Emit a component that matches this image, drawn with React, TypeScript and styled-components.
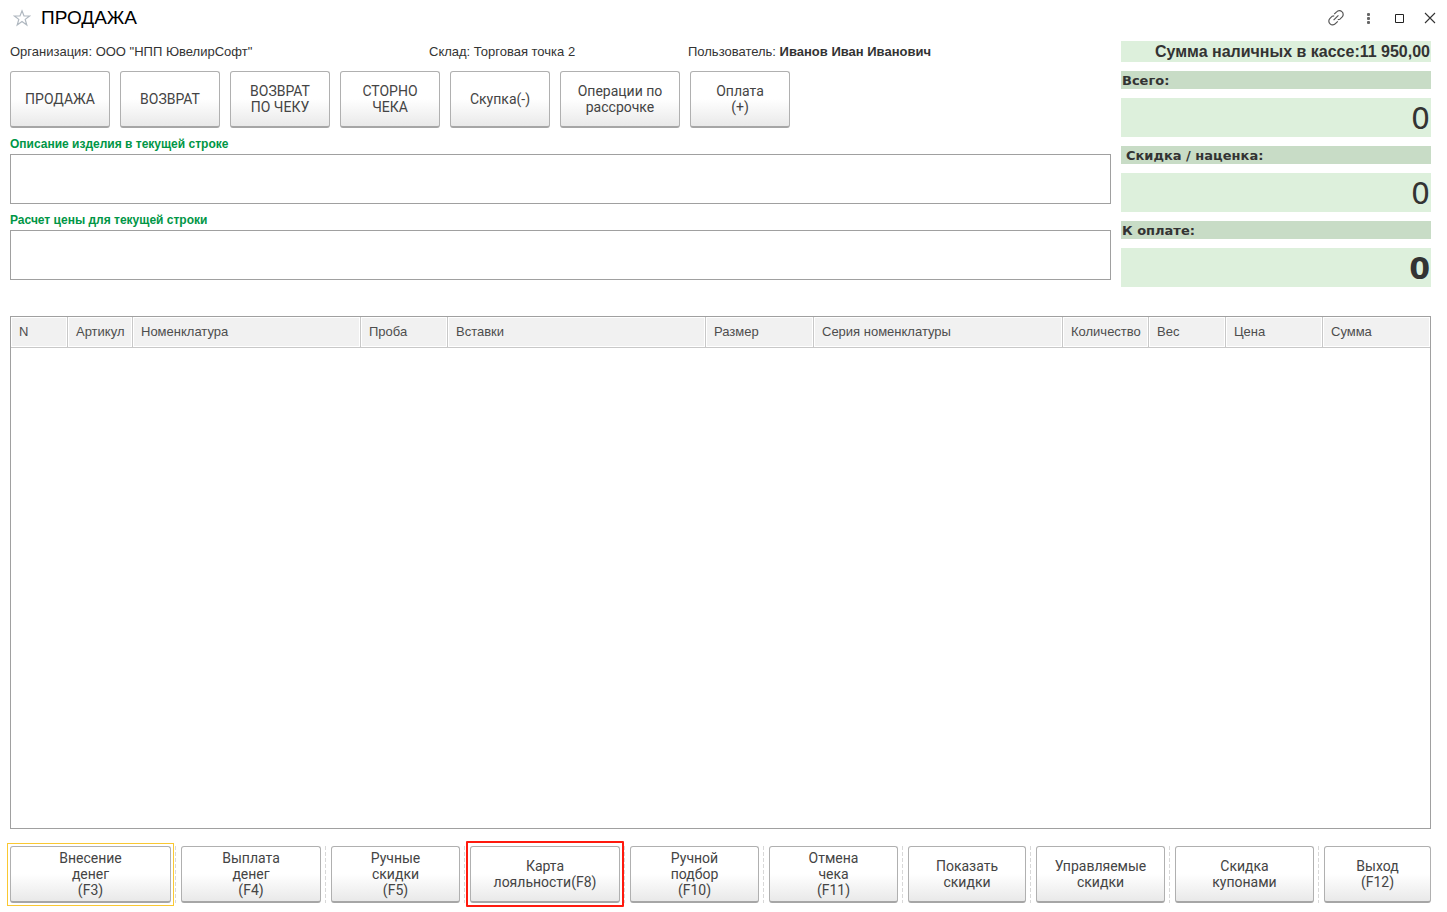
import React from "react";
import styled, { createGlobalStyle, css } from "styled-components";

const sans = `"Liberation Sans", Arial, sans-serif`;

const GlobalStyle = createGlobalStyle`
  *, *::before, *::after { box-sizing: border-box; }
  body { margin: 0; background: #fff; color: #333; font: 13px/16px ${sans}; }
`;

const Window = styled.main`
  display: flex;
  flex-direction: column;
  min-height: 100vh;
  padding: 0 16px 9px 10px;
`;

const TitleBar = styled.header`
  display: flex;
  align-items: center;
  gap: 10px;
  height: 36px;
  padding-left: 3px;
  margin-right: -5px;
`;

const Title = styled.h1`
  flex: 1;
  margin: 0;
  font-size: 19px;
  line-height: 24px;
  font-weight: 400;
  color: #000;
`;

const IconButton = styled.button`
  display: flex;
  align-items: center;
  justify-content: center;
  padding: 0;
  border: 0;
  background: none;
  color: #333;
`;

const WindowControls = styled.div`
  display: flex;
  gap: 16px;
`;

const Top = styled.div`
  display: flex;
  gap: 10px;
  margin-top: 5px;
`;

const Work = styled.section`
  flex: 1;
  min-width: 0;
`;

const Info = styled.div`
  display: flex;
  height: 21px;
  line-height: 21px;
  white-space: nowrap;
`;

const InfoItem = styled.div<{ $width?: number }>`
  width: ${(p) => (p.$width ? `${p.$width}px` : "auto")};
`;

const Actions = styled.div`
  display: flex;
  gap: 10px;
  margin: 9px 0;
`;

const PushButton = styled.button<{ $width?: number; $grow?: number; $mark?: "focus" | "alert" }>`
  position: relative;
  height: 57px;
  padding: 0 4px;
  border: 1px solid #b0b0b0;
  border-bottom: 2px solid #a6a6a6;
  border-radius: 3px;
  background: linear-gradient(#fff 50%, #e9e9e9);
  color: #444;
  font: 14px/16px Roboto, ${sans};
  white-space: pre-line;
  ${(p) => p.$width && css`width: ${p.$width}px;`}
  ${(p) => p.$grow && css`flex: ${p.$grow} 1 ${p.$grow}px; min-width: 0;`}
  ${(p) => p.$mark && css`
    &::after {
      content: "";
      position: absolute;
      z-index: 1;
      pointer-events: none;
    }
  `}
  ${(p) => p.$mark === "focus" && css`&::after { inset: -4px -4px -5px; border: 1px solid #fac832; }`}
  ${(p) => p.$mark === "alert" && css`&::after { inset: -6px -5px; border: 2px solid #ff1a0e; border-radius: 1px; }`}
`;

const FieldLabel = styled.label`
  display: block;
  height: 17px;
  line-height: 14px;
  font-size: 12px;
  font-weight: 700;
  color: #009646;
`;

const Field = styled.textarea`
  display: block;
  width: 100%;
  height: 50px;
  margin-bottom: 9px;
  border: 1px solid #a0a0a0;
  border-radius: 0;
  resize: none;
`;

const Totals = styled.aside`
  display: flex;
  flex-direction: column;
  gap: 9px;
  width: 310px;
`;

const Cash = styled.div`
  height: 21px;
  background: #ddf0dc;
  font-size: 16px;
  line-height: 21px;
  font-weight: 700;
  text-align: right;
  padding-right: 1px;
`;

const TotalName = styled.div<{ $indent?: boolean }>`
  height: 18px;
  padding-left: ${(p) => (p.$indent ? 5 : 1)}px;
  background: #c8dcc6;
  font: 700 13px/20px "DejaVu Sans", Verdana, sans-serif;
`;

const TotalValue = styled.div<{ $strong?: boolean }>`
  height: 39px;
  padding-right: 1px;
  background: #ddf0dc;
  font: ${(p) => (p.$strong ? 700 : 400)} 30px/42px "DejaVu Sans", Tahoma, sans-serif;
  text-align: right;
`;

const Grid = styled.div`
  flex: 1;
  margin-top: 27px;
  border: 1px solid #a0a0a0;
`;

const Table = styled.table`
  width: 100%;
  table-layout: fixed;
  border-collapse: separate;
  border-spacing: 0;
`;

const HeadCell = styled.th<{ $width: number }>`
  width: ${(p) => p.$width}px;
  height: 31px;
  padding: 0 0 1px 8px;
  border: solid #c8c8c8;
  border-width: 0 1px 1px 0;
  background: #f1f1f1;
  box-shadow: inset 0 0 0 1px #fff;
  color: #4d4d4d;
  font-weight: 400;
  text-align: left;
  white-space: nowrap;
  &:last-child { border-right: 0; }
`;

const Commands = styled.footer`
  display: flex;
  margin-top: 17px;
`;

const Divider = styled.span`
  flex: none;
  width: 1px;
  margin: 0 5px 0 4px;
  background: repeating-linear-gradient(#d8d8d8 0 4px, transparent 4px 6px);
`;

const columns: [string, number][] = [
  ["N", 57], ["Артикул", 65], ["Номенклатура", 228], ["Проба", 87], ["Вставки", 258],
  ["Размер", 108], ["Серия номенклатуры", 249], ["Количество", 86], ["Вес", 77], ["Цена", 97], ["Сумма", 107],
];

const actions: [string, number][] = [
  ["ПРОДАЖА", 100], ["ВОЗВРАТ", 100], ["ВОЗВРАТ\nПО ЧЕКУ", 100], ["СТОРНО\nЧЕКА", 100],
  ["Скупка(-)", 100], ["Операции по\nрассрочке", 120], ["Оплата\n(+)", 100],
];

const commands: { text: string; grow: number; mark?: "focus" | "alert" }[] = [
  { text: "Внесение\nденег\n(F3)", grow: 161, mark: "focus" },
  { text: "Выплата\nденег\n(F4)", grow: 140 },
  { text: "Ручные\nскидки\n(F5)", grow: 129 },
  { text: "Карта\nлояльности(F8)", grow: 150, mark: "alert" },
  { text: "Ручной\nподбор\n(F10)", grow: 129 },
  { text: "Отмена\nчека\n(F11)", grow: 129 },
  { text: "Показать\nскидки", grow: 118 },
  { text: "Управляемые\nскидки", grow: 129 },
  { text: "Скидка\nкупонами", grow: 139 },
  { text: "Выход\n(F12)", grow: 107 },
];

export default function App() {
  return (
    <>
      <GlobalStyle />
      <Window>
        <TitleBar>
          <IconButton aria-label="В избранное">
            <svg width="18" height="18" viewBox="0 0 18 18" fill="none" stroke="#b0b8c0" strokeWidth="1.2">
              <path d="M9 1.8 11 7H16.6L12.2 10.4 13.8 16 9 12.6 4.2 16 5.8 10.4 1.4 7H7Z" />
            </svg>
          </IconButton>
          <Title>ПРОДАЖА</Title>
          <WindowControls>
            <IconButton aria-label="Получить ссылку">
              <svg width="16" height="18" viewBox="0 0 16 18" fill="none" stroke="#555" strokeWidth="1.2">
                <path d="M6.2 5.2 8.6 2.8A3.7 3.7 0 0 1 13.9 2.6 3.7 3.7 0 0 1 14.2 7.9L11.8 10.3 9.8 10.6" />
                <path d="M9.8 12.3 7.4 14.7A3.7 3.7 0 0 1 2.1 14.9 3.7 3.7 0 0 1 1.8 9.6L4.2 7.2 6.2 6.9" />
                <path d="M5.6 11.1 10.4 6.4" />
              </svg>
            </IconButton>
            <IconButton aria-label="Ещё">
              <svg width="17" height="18" viewBox="0 0 17 18" fill="#666">
                <rect x="7" y="4" width="3" height="3" rx="1" />
                <rect x="7" y="8" width="3" height="3" rx="1" />
                <rect x="7" y="12" width="3" height="3" rx="1" />
              </svg>
            </IconButton>
            <IconButton aria-label="Развернуть">
              <svg width="14" height="18" viewBox="0 0 14 18" fill="none" stroke="#222">
                <path d="M2.5 5.5H10.5V13.5H2.5Z" />
              </svg>
            </IconButton>
            <IconButton aria-label="Закрыть">
              <svg width="13" height="18" viewBox="0 0 13 18" fill="none" stroke="#333" strokeWidth="1.1">
                <path d="M2 4 12 14M12 4 2 14" />
              </svg>
            </IconButton>
          </WindowControls>
        </TitleBar>

        <Top>
          <Work>
            <Info>
              <InfoItem $width={419}>Организация: ООО "НПП ЮвелирСофт"</InfoItem>
              <InfoItem $width={259}>Склад: Торговая точка 2</InfoItem>
              <InfoItem>Пользователь: <b>Иванов Иван Иванович</b></InfoItem>
            </Info>
            <Actions>
              {actions.map(([text, width]) => (
                <PushButton key={text} $width={width}>{text}</PushButton>
              ))}
            </Actions>
            <FieldLabel htmlFor="description">Описание изделия в текущей строке</FieldLabel>
            <Field id="description" readOnly />
            <FieldLabel htmlFor="price">Расчет цены для текущей строки</FieldLabel>
            <Field id="price" readOnly />
          </Work>
          <Totals>
            <Cash>Сумма наличных в кассе:11 950,00</Cash>
            <TotalName>Всего:</TotalName>
            <TotalValue>0</TotalValue>
            <TotalName $indent>Скидка / наценка:</TotalName>
            <TotalValue>0</TotalValue>
            <TotalName>К оплате:</TotalName>
            <TotalValue $strong>0</TotalValue>
          </Totals>
        </Top>

        <Grid>
          <Table>
            <thead>
              <tr>
                {columns.map(([name, width]) => (
                  <HeadCell key={name} scope="col" $width={width}>{name}</HeadCell>
                ))}
              </tr>
            </thead>
            <tbody />
          </Table>
        </Grid>

        <Commands>
          {commands.map(({ text, grow, mark }, i) => (
            <React.Fragment key={text}>
              {i > 0 && <Divider />}
              <PushButton $grow={grow} $mark={mark}>{text}</PushButton>
            </React.Fragment>
          ))}
        </Commands>
      </Window>
    </>
  );
}
